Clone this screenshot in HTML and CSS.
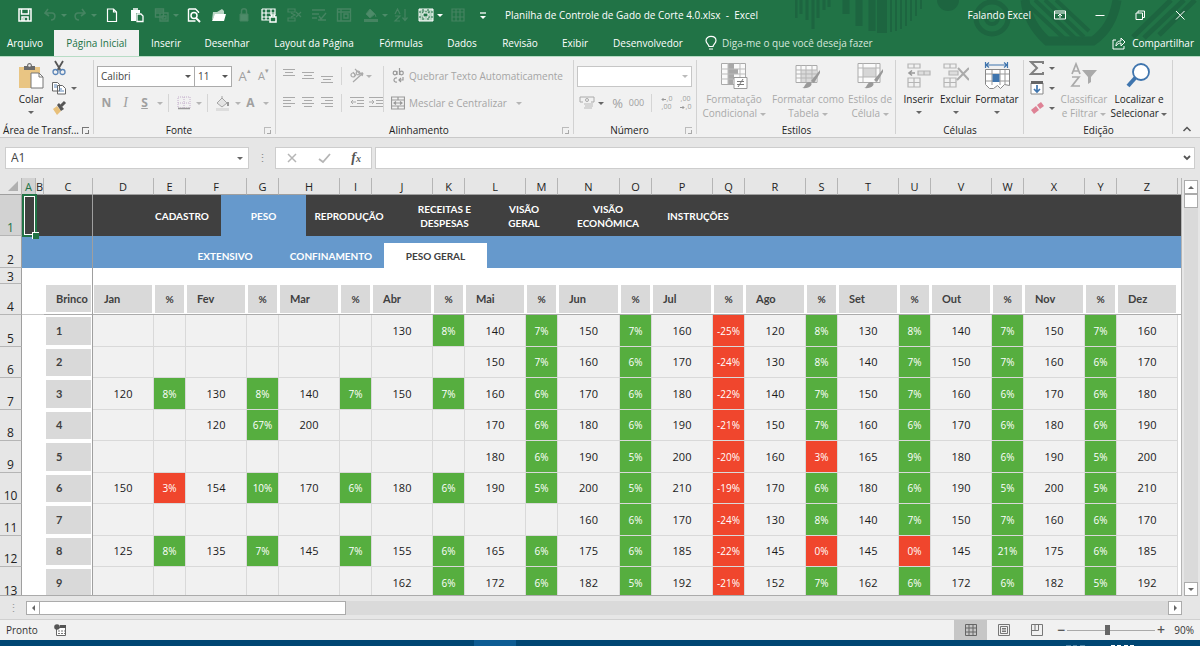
FILE: index.html
```html
<!DOCTYPE html>
<html lang="pt-BR">
<head>
<meta charset="utf-8">
<title>Planilha de Controle de Gado de Corte 4.0.xlsx - Excel</title>
<link rel="stylesheet" href="styles.css">
</head>
<body>
<div class="app">
  <header class="top">
    <svg class="art" width="405" height="56" viewBox="0 0 405 56" aria-hidden="true">
      <g fill="none" stroke="#1d6540" stroke-width="3">
        <path d="M1 0v18M6 0v14M12 0v20M18 0v29M23 0v18M29 0v10M34 0v7"/>
        <path stroke-width="7" d="M51 0v14M64 0v26M77 0v31"/><path stroke-width="10" d="M87 0v33"/>
        <path stroke-width="2" d="M96 0v32M101 0v31M106 0v29M111 0v26M116 0v21M121 0v16M126 0v9"/>
        <circle cx="197" cy="18" r="16" stroke-width="5"/><circle cx="197" cy="18" r="6" stroke-width="4"/>
        <path stroke-width="9" d="M230 0c2 18 10 30 22 41h46c13-9 21-22 24-41"/>
        <path stroke-width="4" d="M240 0l42 40M250 0l39 37M261 0l33 31M228 0l44 41"/>
        <path stroke-width="5" d="M338 37l38-37M349 38l40-38M364 35l36-35"/>
      </g>
      <circle cx="153" cy="0" r="11" fill="#1d6540"/>
    </svg>
    <div class="titlebar">
      <div class="qat">
        <button class="q on" aria-label="Salvar"><svg viewBox="0 0 16 16"><path d="M2 2h12v12H2zM4.500 2v5h7V2M5 14v-4h6v4M7 11v3" fill="none" stroke-width="1.500"/></svg></button>
        <button class="q wide" aria-label="Desfazer"><svg viewBox="0 0 16 16"><path d="M6 2L3 6l4 3M3 6h7c4 0 4 7-1 7" fill="none" stroke-width="1.600"/></svg><i class="dd"></i></button>
        <button class="q wide" aria-label="Refazer"><svg viewBox="0 0 16 16"><path d="M10 2l3 4-4 3M13 6H6c-4 0-4 7 1 7" fill="none" stroke-width="1.600"/></svg><i class="dd"></i></button>
        <button class="q on gap" aria-label="Novo"><svg viewBox="0 0 16 16"><path d="M3.500 2h6l3 3v9.500h-9zM9.500 2v3h3" fill="none" stroke-width="1.200"/></svg></button>
        <button class="q on" aria-label="Colar"><svg viewBox="0 0 16 16"><path d="M2 3h9v3H7v8H2z" fill="#fff" stroke="none"/><path d="M4 2h5M8 7h4l2 2v5.500H8z" fill="#217346" stroke-width="1.300"/></svg></button>
        <button class="q wide" aria-label="Copiar"><svg viewBox="0 0 16 16"><path d="M1.500 2h8v8h-8zM2 4h7M2 6h4M6 6h8v8H6zM8 9h4v3H8z" fill="none" stroke-width="1.400"/></svg><i class="dd"></i></button>
        <button class="q on gap" aria-label="Visualizar"><svg viewBox="0 0 16 16"><path d="M2.500 2h7l3 3v1M2.500 2v12h7" fill="none" stroke-width="1.400"/><circle cx="8" cy="8.500" r="3" fill="none" stroke-width="1.500"/><path d="M10 11l4 4" stroke-width="2"/></svg></button>
        <button class="q on" aria-label="Abrir"><svg viewBox="0 0 16 16"><path d="M1 13l1-8h4l5-3 2 2v3H5z" fill="#b9d5c5" stroke="none"/><path d="M1 14l3-7h11l-2 7z" fill="#fff" stroke="none"/></svg></button>
        <button class="q" aria-label="Proteger"><svg viewBox="0 0 16 16"><path d="M4 7h8v7H4z" fill="#4d8b69" /><path d="M5.500 7V4c0-3 5-3 5 0v3" fill="none" stroke-width="1.500"/></svg></button>
        <button class="q on" aria-label="Bloquear células"><svg viewBox="0 0 16 16"><path d="M1 2h13v6M1 2v11h7M1 6h13M1 10h8M5 2v11M10 2v6" fill="none" stroke-width="1.200"/><path d="M9 10h6v5H9zM10.500 10V8h3v2" fill="#217346" stroke-width="1.500"/></svg></button>
        <button class="q" aria-label="Excluir células"><svg viewBox="0 0 16 16"><path d="M2 2h7v3H2zM2 11h7v3H2zM5 6l4 2-4 2M10 5l5 5M15 5l-5 5" fill="none" stroke-width="1.200"/></svg></button>
        <button class="q" aria-label="Validar"><svg viewBox="0 0 16 16"><path d="M1 3h13M1 7h7M1 11h5M7 13h8M8 9l2 3 5-6" fill="none" stroke-width="1.400"/></svg></button>
        <button class="q" aria-label="Tabela"><svg viewBox="0 0 16 16"><path d="M1.500 2h13v12h-13zM1.500 5h13M5 2v12M8 7h4v4H8z" fill="none" stroke-width="1.400"/></svg></button>
        <button class="q wide gap" aria-label="Preenchimento"><svg viewBox="0 0 16 16"><path d="M7 2l5 5-5 4-4-4zM12 7l1 3" fill="#4d8b69"/><path d="M1 13.500h14" stroke-width="3"/></svg><i class="dd"></i></button>
        <button class="q" aria-label="Classificar"><svg viewBox="0 0 16 16"><path d="M2 7l2.500-5L7 7M2 9h5l-5 5h5M12 2v11M9.500 10.500L12 13.500l2.500-3" fill="none" stroke-width="1.200"/></svg></button>
        <button class="q wide on" aria-label="Congelar painéis"><svg viewBox="0 0 16 16"><path d="M1 2h14v12H1z" fill="#b9d5c5"/><path d="M1 5h14M1 10h14M5 2v12M10 2v12" stroke="#217346" stroke-dasharray="2 1"/><path d="M5 6h5v4H5z" fill="#217346" stroke="#fff"/></svg><i class="dd"></i></button>
        <button class="q gap" aria-label="Inserir tabela"><svg viewBox="0 0 16 16"><path d="M2 2h12v12H2zM2 5h12M6 2v12M10 2v12M2 10h12" fill="none" stroke-width="1.200"/></svg></button>
        <button class="q on" aria-label="Personalizar"><svg viewBox="0 0 16 16"><path d="M5 6h6" stroke-width="1.300"/><path d="M5 9h6l-3 3z" fill="#fff" stroke="none"/></svg></button>
      </div>
      <h1 class="title">Planilha de Controle de Gado de Corte 4.0.xlsx&nbsp; -&nbsp; Excel</h1>
      <div class="win">
        <span class="user">Falando Excel</span>
        <button aria-label="Opções da faixa"><svg viewBox="0 0 14 14"><path d="M1.500 3h11v8h-11zM1.500 5h11M7 10V6M5 8l2-2 2 2"/></svg></button>
        <button aria-label="Minimizar"><svg viewBox="0 0 14 14"><path d="M2.500 7.500h9"/></svg></button>
        <button aria-label="Restaurar"><svg viewBox="0 0 14 14"><path d="M3 5h6.500v6.500H3zM5 5V3h6.500v6.500h-2"/></svg></button>
        <button aria-label="Fechar"><svg viewBox="0 0 14 14"><path d="M3 3l8.500 8.500M11.500 3L3 11.500"/></svg></button>
      </div>
    </div>
    <nav class="tabs">
      <a href="#" class="t50">Arquivo</a><a href="#" class="t85 active">Página Inicial</a><a href="#" class="t54">Inserir</a><a href="#" class="t68">Desenhar</a><a href="#" class="t106">Layout da Página</a><a href="#" class="t68">Fórmulas</a><a href="#" class="t54">Dados</a><a href="#" class="t62">Revisão</a><a href="#" class="t48">Exibir</a><a href="#" class="t98">Desenvolvedor</a>
      <a href="#" class="tell"><svg width="12" height="16" viewBox="0 0 12 16"><path d="M4 11.500c0-2-3-3-3-6C1 0 11 0 11 5.500c0 3-3 4-3 6zM4 14h4" fill="none" stroke="#fff" stroke-width="1.200"/></svg>Diga-me o que você deseja fazer</a>
      <a href="#" class="share"><svg width="14" height="14" viewBox="0 0 14 14"><path d="M4 4H1v9h11v-3M4 10c0-4 2-5 5-5V2l4 4-4 4V7c-2 0-4 1-5 3z" fill="none" stroke="#fff"/></svg>Compartilhar</a>
    </nav>
  </header>

  <section class="ribbon" aria-label="Faixa de opções">
    <div class="group g-clip">
      <div class="body">
        <button class="big paste"><svg width="28" height="28" viewBox="0 0 28 28"><path d="M2 5h21v21H2z" fill="#e9c583"/><path d="M7 4h3c0-4 5-4 5 0h3v4H7z" fill="#6b6b6b"/><circle cx="12.500" cy="3.500" r="1.300" fill="#f1f1f1"/><path d="M14 11h8l4 4v11H14z" fill="#fff" stroke="#777"/><path d="M22 11v4h4" fill="none" stroke="#777"/></svg><span>Colar</span><i class="dd"></i></button>
        <div class="stack">
          <button aria-label="Recortar"><svg width="16" height="16" viewBox="0 0 16 16"><path d="M4 1l6 10M12 1L6 11" stroke="#555" stroke-width="1.800"/><circle cx="4.500" cy="12" r="2.500" fill="none" stroke="#5c86b8" stroke-width="1.300"/><circle cx="11.500" cy="12" r="2.500" fill="none" stroke="#5c86b8" stroke-width="1.300"/></svg></button>
          <button aria-label="Copiar"><svg width="16" height="16" viewBox="0 0 16 16"><path d="M1.500 2.500h5l2 2V11h-7zM6.500 5.500h5l3 3V14h-8z" fill="#fff" stroke="#666"/><path d="M3 5h3M3 7h3M8 9h3M8 11h5" stroke="#5c86b8"/></svg><i class="dd"></i></button>
          <button aria-label="Pincel"><svg width="16" height="16" viewBox="0 0 16 16"><path d="M2 9l4-3 4 5-4 4z" fill="#e8c07a"/><path d="M6 5l2-2 5 6-3 2z" fill="#555"/><path d="M10 6l4-4" stroke="#555" stroke-width="3"/></svg></button>
        </div>
      </div>
      <div class="foot"><span>Área de Transf...</span><button class="launch dark" aria-label="Mais"></button></div>
    </div>

    <div class="group g-font">
      <div class="body rows">
        <div class="row">
          <label class="combo c96"><select aria-label="Fonte"><option>Calibri</option></select></label>
          <label class="combo c38"><select aria-label="Tamanho"><option>11</option></select></label>
          <button class="ic w20 grow" aria-label="Aumentar">A<sup>▴</sup></button><button class="ic w20 shrink" aria-label="Diminuir">A<sup>▾</sup></button>
        </div>
        <div class="row">
          <button class="ic w20"><b>N</b></button><button class="ic w20 serif"><em>I</em></button><button class="ic w20"><b><u>S</u></b></button><i class="dd pale"></i><i class="sep"></i>
          <button class="ic w20" aria-label="Bordas"><svg width="14" height="14" viewBox="0 0 14 14"><path d="M1 1h12v11H1zM7 1v11M1 7h12" fill="none" stroke="#c3aecb" stroke-dasharray="1 1"/><path d="M1 12.500h12" stroke="#999" stroke-width="1.500"/></svg></button><i class="dd pale"></i><i class="sep"></i>
          <button class="ic w20" aria-label="Cor de preenchimento"><svg width="16" height="15" viewBox="0 0 16 15"><path d="M7 2l5 5-5 4-5-4zM7 2V0" fill="#e4e4e4" stroke="#a5a5a5"/><path d="M13 6v4" stroke="#999" stroke-width="2"/><path d="M1 13.500h13" stroke="#ddd" stroke-width="3"/></svg></button><i class="dd pale"></i>
          <button class="ic w20" aria-label="Cor da fonte"><b>A</b></button><i class="dd pale"></i>
        </div>
      </div>
      <div class="foot"><span>Fonte</span><button class="launch" aria-label="Mais"></button></div>
    </div>

    <div class="group g-align">
      <div class="body">
        <div class="rows acol">
          <div class="row">
            <button class="ic w20" aria-label="Em cima"><svg class="ln" viewBox="0 0 14 16"><path d="M1 1.500h12M3 4.500h8M1 7.500h12"/></svg></button><button class="ic w20" aria-label="Meio"><svg class="ln" viewBox="0 0 14 16"><path d="M1 4.500h12M3 7.500h8M1 10.500h12"/></svg></button><button class="ic w20" aria-label="Embaixo"><svg class="ln" viewBox="0 0 14 16"><path d="M1 8.500h12M3 11.500h8M1 14.500h12"/></svg></button><i class="sep"></i>
            <button class="ic w20" aria-label="Orientação"><svg width="16" height="16" viewBox="0 0 16 16"><path d="M4 14L14 5M14 5l-3 .5M14 5l-1 3" fill="none" stroke="#aaa" stroke-width="1.300"/><circle cx="4" cy="7" r="2" fill="none" stroke="#aaa" stroke-width="1.200"/><path d="M4 4l3 4M6 1l5 5" stroke="#aaa" stroke-width="1.200"/><circle cx="9" cy="5" r="1.800" fill="none" stroke="#aaa" stroke-width="1.200"/></svg></button><i class="dd pale"></i>
          </div>
          <div class="row">
            <button class="ic w20" aria-label="Esquerda"><svg class="ln" viewBox="0 0 14 16"><path d="M1 2.500h12M1 5.500h8M1 8.500h12M1 11.500h8"/></svg></button><button class="ic w20" aria-label="Centro"><svg class="ln" viewBox="0 0 14 16"><path d="M1 2.500h12M3 5.500h8M1 8.500h12M3 11.500h8"/></svg></button><button class="ic w20" aria-label="Direita"><svg class="ln" viewBox="0 0 14 16"><path d="M1 2.500h12M5 5.500h8M1 8.500h12M5 11.500h8"/></svg></button><i class="sep"></i>
            <button class="ic w20" aria-label="Diminuir recuo"><svg class="ln" viewBox="0 0 14 16"><path d="M0 2.500h14M7 5.500h7M7 8.500h7M0 11.500h14M6 7H1M3 5L1 7l2 2"/></svg></button><button class="ic w20" aria-label="Aumentar recuo"><svg class="ln" viewBox="0 0 14 16"><path d="M0 2.500h14M7 5.500h7M7 8.500h7M0 11.500h14M0 7h5M3 5l2 2-2 2"/></svg></button>
          </div>
        </div>
        <i class="sep tall"></i>
        <div class="rows tcol">
          <div class="row"><button class="txt"><svg width="14" height="16" viewBox="0 0 14 16" fill="none" stroke="#999" stroke-width="1.200"><circle cx="4" cy="5" r="1.800"/><path d="M6 3v4M8.500 0v7M6 10c-4-1-4 5 0 4M12 9v3H8M10 10l-2 2 2 2"/><circle cx="10.500" cy="5" r="1.800"/></svg>Quebrar Texto Automaticamente</button></div>
          <div class="row"><button class="txt"><svg width="14" height="14" viewBox="0 0 14 14" fill="none" stroke="#999" stroke-width="1.200"><path d="M.5 1h13v12H.5zM.5 4h13M.5 10h13M7 1v3M7 10v3M3 7h8M5 5.500L3 7l2 1.500M9 5.500L11 7 9 8.500"/></svg>Mesclar e Centralizar<i class="dd pale"></i></button></div>
        </div>
      </div>
      <div class="foot"><span>Alinhamento</span><button class="launch" aria-label="Mais"></button></div>
    </div>

    <div class="group g-num">
      <div class="body rows">
        <div class="row"><label class="combo c115 off"><select aria-label="Formato de número"><option></option></select></label></div>
        <div class="row">
          <button class="ic w20" aria-label="Moeda"><svg width="16" height="16" viewBox="0 0 16 16" fill="none" stroke="#aaa"><path d="M1 7V2h14v5h-3M1 7h3"/><circle cx="8" cy="5" r="1.500"/><path d="M5 9h9M6 11h8M5 13h8" stroke="#ccc" stroke-width="1.500"/></svg></button><i class="dd"></i>
          <button class="ic w20 pct">%</button><button class="ic w20 mil">000</button><i class="sep"></i>
          <button class="ic w20 dec" aria-label="Aumentar casas"><span><svg width="5" height="5" viewBox="0 0 5 5"><path d="M5 2.500H1M2.500 1L1 2.500 2.500 4"/></svg>,0</span><span>,00</span></button><button class="ic w20 dec" aria-label="Diminuir casas"><span>,00</span><span><svg width="5" height="5" viewBox="0 0 5 5"><path d="M0 2.500h4M2.500 1L4 2.500 2.500 4"/></svg>,0</span></button>
        </div>
      </div>
      <div class="foot"><span>Número</span><button class="launch" aria-label="Mais"></button></div>
    </div>

    <div class="group g-style">
      <div class="body">
        <button class="big off w74"><svg width="28" height="28" viewBox="0 0 28 28"><path d="M1.500 1.500h24v21h-24z" fill="#fafafa" stroke="#aaa"/><path d="M8 2h6v5H8zM8 7h10v5H8zM8 12h6v5H8zM8 17h5v5H8z" fill="#a8a8a8"/><path d="M8 1v21M20 1v21M1 7h24M1 12h24M1 17h24" stroke="#bbb" fill="none"/><path d="M14 15.500h13v11H14z" fill="#fff" stroke="#999"/><path d="M17 19.500h7M17 22.500h7M23 17l-5 8" stroke="#777"/></svg><span>Formatação<br>Condicional <i class="dd pale"></i></span></button>
        <button class="big off w74"><svg width="28" height="28" viewBox="0 0 28 28"><path d="M2 3.500h21v17H2z" fill="#fafafa" stroke="#aaa"/><path d="M7 8h16v12H7z" fill="#dadada"/><path d="M2 8h21M2 12h21M2 16h21M7 3v17M12 3v17M18 3v17" stroke="#b5b5b5"/><path d="M26 8l-9 11 3 2 6-10z" fill="#999"/><path d="M8 26c3 0 3-7 8-6 4 2 0 7-8 6z" fill="#999"/></svg><span>Formatar como<br>Tabela <i class="dd pale"></i></span></button>
        <button class="big off w50"><svg width="28" height="28" viewBox="0 0 28 28"><path d="M2 1.500h22v19H2z" fill="#fafafa" stroke="#aaa"/><path d="M7 6h13v9H7z" fill="#d6d6d6"/><path d="M2 6h22M2 15h22M7 1v19M20 1v19" stroke="#b5b5b5"/><path d="M27 7l-9 11 3 2 6-10z" fill="#999"/><path d="M8 26c3 0 3-7 8-6 4 2 0 7-8 6z" fill="#999"/></svg><span>Estilos de<br>Célula <i class="dd pale"></i></span></button>
      </div>
      <div class="foot"><span>Estilos</span></div>
    </div>

    <div class="group g-cell">
      <div class="body">
        <button class="big w37"><svg width="26" height="28" viewBox="0 0 26 28" fill="none" stroke="#b5b5b5" stroke-width="1.200"><path d="M2 2h12v4H2zM8 2v4M2 16h12v9H2zM2 20.500h12M8 16v9"/><path d="M12 9h12v4H12zM18 9v4" fill="#ddd"/><path d="M9 11H3M6 8.500L3 11l3 2.500" stroke="#999" stroke-width="1.600"/></svg><span>Inserir</span><i class="dd"></i></button>
        <button class="big w37"><svg width="26" height="28" viewBox="0 0 26 28" fill="none" stroke="#b5b5b5" stroke-width="1.200"><path d="M1 2h12v4H1zM7 2v4M1 16h12v9H1zM1 20.500h12M7 16v9"/><path d="M6 9h9v4H6z" fill="#ddd"/><path d="M15 6l11 12M26 6L14 18" stroke="#aaa" stroke-width="2"/></svg><span>Excluir</span><i class="dd"></i></button>
        <button class="big w46"><svg width="28" height="28" viewBox="0 0 28 28"><path d="M3 3h21M6 .5L3 3l3 2.500M21 .5L24 3l-3 2.500M2.500 0v6M24.500 0v6" fill="none" stroke="#3f75ae" stroke-width="1.200"/><path d="M2.500 7.500h24v16l-5-1-4 4-3-3-4 3h-4l-4-4z" fill="#fff" stroke="#888"/><path d="M9 8v15M17 8v15M22 8v15M3 12h23M3 19h23" stroke="#999" fill="none"/><path d="M9.500 12h7v8h-7z" fill="#3f75ae"/></svg><span>Formatar</span><i class="dd"></i></button>
      </div>
      <div class="foot"><span>Células</span></div>
    </div>

    <div class="group g-edit">
      <div class="body">
        <div class="stack">
          <button aria-label="Soma"><svg width="16" height="16" viewBox="0 0 16 16"><path d="M14 4V2H2l6 6-6 6h12v-2" fill="none" stroke="#808080" stroke-width="2"/></svg><i class="dd"></i></button>
          <button aria-label="Preencher"><svg width="16" height="16" viewBox="0 0 16 16"><path d="M2 3h12v11H2z" fill="#fff" stroke="#888"/><path d="M2 2.500h12" stroke="#666" stroke-width="3"/><path d="M8 5v7M5 9l3 3 3-3" fill="none" stroke="#3f75ae" stroke-width="1.700"/></svg><i class="dd"></i></button>
          <button aria-label="Limpar"><svg width="16" height="16" viewBox="0 0 16 16"><path d="M8 5l4-3 3 4-4 3z" fill="#de8295"/><path d="M7 6l3 4-5 4-3-4z" fill="#de8295"/></svg><i class="dd"></i></button>
        </div>
        <button class="big off w54"><svg width="28" height="28" viewBox="0 0 28 28" fill="none" stroke="#aaa" stroke-width="1.700"><path d="M2 12l4-10 4 10M3.500 9h5M2 15h7l-7 9h8"/><path d="M12 8h15l-6 7v5l-3 2v-7z" fill="#aaa" stroke="none"/></svg><span>Classificar<br>e Filtrar <i class="dd pale"></i></span></button>
        <button class="big w56"><svg width="28" height="28" viewBox="0 0 28 28"><path d="M11 15l-8 9" stroke="#3f75ae" stroke-width="4"/><circle cx="16" cy="10" r="8" fill="#fff" stroke="#3f75ae" stroke-width="1.800"/></svg><span>Localizar e<br>Selecionar <i class="dd"></i></span></button>
      </div>
      <div class="foot"><span>Edição</span></div>
    </div>
    <button class="collapse" aria-label="Recolher"><svg width="10" height="8" viewBox="0 0 10 8"><path d="M1.500 6L5 2.500 8.500 6" fill="none" stroke="#555" stroke-width="1.500"/></svg></button>
  </section>

  <section class="fbar">
    <label class="namebox"><input value="A1" aria-label="Caixa de nome"><i class="dd"></i></label>
    <span class="dots">⋮</span>
    <div class="fx">
      <button aria-label="Cancelar"><svg width="12" height="12" viewBox="0 0 12 12"><path d="M2 2l8 8M10 2l-8 8" stroke="#b5b5b5" stroke-width="1.500"/></svg></button>
      <button aria-label="Confirmar"><svg width="13" height="12" viewBox="0 0 13 12"><path d="M1 7l4 3 7-8" fill="none" stroke="#b5b5b5" stroke-width="1.800"/></svg></button>
      <button class="fxi">f<small>x</small></button>
    </div>
    <label class="formula"><input aria-label="Fórmula"><svg width="10" height="8" viewBox="0 0 10 8"><path d="M2 2l3 3 3-3" fill="none" stroke="#555" stroke-width="1.800"/></svg></label>
  </section>

  <main class="sheet">
    <div class="grid">
      <table id="cells"></table>
      <div class="cursor"></div>
    </div>
    <div class="vscroll"><button aria-label="Acima"><i class="up"></i></button><div class="vthumb"></div><div class="space"></div><button aria-label="Abaixo"><i class="down"></i></button></div>
  </main>

  <div class="hscroll"><span class="dots">⋮</span><div class="htrack"><button aria-label="Esquerda"><i class="left"></i></button><div class="hthumb"></div><div class="space"></div><button aria-label="Direita"><i class="right"></i></button></div></div>

  <footer class="status">
    <span class="ready">Pronto</span>
    <svg width="13" height="13" viewBox="0 0 13 13"><path d="M2.500 3.500h9v8h-9z" fill="#fff" stroke="#666"/><path d="M6 2.500h6" stroke="#555" stroke-width="3"/><circle cx="3" cy="3" r="2.800" fill="#555"/><path d="M4 7h7M4 9.500h7" stroke="#777" stroke-dasharray="2 1"/></svg>
    <div class="views">
      <button class="sel" aria-label="Normal"><svg width="12" height="12" viewBox="0 0 12 12"><path d="M.5.5h11v11H.5zM.5 4h11M.5 8h11M4 .5v11M8 .5v11" fill="none" stroke="#666"/></svg></button>
      <button aria-label="Layout da página"><svg width="12" height="12" viewBox="0 0 12 12"><path d="M.5.5h11v11H.5zM2.500 2.500h7v7h-7zM4 4.500h4M4 6h4M4 7.500h4" fill="none" stroke="#777"/></svg></button>
      <button aria-label="Quebra de página"><svg width="12" height="12" viewBox="0 0 12 12"><path d="M.5.5h11v11H.5zM.5 6.500h7v-6M4 .5v6" fill="none" stroke="#777"/></svg></button>
    </div>
    <button class="zm" aria-label="Reduzir">−</button>
    <input class="range" type="range" min="10" max="200" value="96" aria-label="Zoom">
    <button class="zm" aria-label="Ampliar">+</button>
    <span class="pctv">90%</span>
  </footer>
  <div class="taskbar"><span class="run"></span><svg width="72" height="6" viewBox="0 0 72 6"><path d="M0 5.500h5M7 5.500h4M14 5.500h5" stroke="#4f86a8"/><path d="M45 5.500h4M51 5.500h4M58 5.500h4M64 5.500h4" stroke="#fff"/></svg></div>
</div>
<script src="script.js"></script>
</body>
</html>
```
FILE: styles.css
```css
:root { --ui: "Open Sans", "Noto Sans", sans-serif; --cell: Lato, "Open Sans", sans-serif; --green: #217346; }
* { box-sizing: border-box; }
body { margin: 0; font: 11px/14px var(--ui); color: #333; background: #e6e6e6; }
button { border: 0; padding: 0; background: none; font: inherit; color: inherit; }
a { color: inherit; text-decoration: none; }
svg { display: block; flex: none; }
.app { display: flex; flex-direction: column; height: 100vh; overflow: hidden; }
.space { flex: 1; }

.dd { display: inline-block; flex: none; border: 3px solid transparent; border-top-color: #666; border-bottom: 0; width: 0; height: 0; vertical-align: middle; }
.dd.pale { border-top-color: #b5b5b5; }

.top { position: relative; background: var(--green); color: #fff; height: 56px; flex: none; }
.art { position: absolute; right: 0; top: 0; }
.titlebar { position: relative; display: flex; height: 30px; align-items: center; }
.qat { display: flex; padding-left: 13px; width: 505px; flex: none; }
.q { width: 25px; height: 16px; display: flex; align-items: center; gap: 3px; padding-left: 4px; }
.q svg { width: 16px; height: 16px; stroke: #458461; }
.q.on svg { stroke: #fff; }
.q.wide { width: 30px; }
.q.gap { margin-left: 2px; }
.q .dd { border-top-color: #4d8b69; }
.q.on .dd { border-top-color: #fff; }
.title { margin: 0; font-size: 10px; font-weight: 400; line-height: 14px; white-space: nowrap; flex: 1; }
.win { display: flex; align-items: center; }
.user { margin-right: 9px; font-size: 10px; }
.win button { width: 40px; display: flex; justify-content: center; }
.win svg { width: 14px; height: 14px; fill: none; stroke: #fff; }
.tabs { position: relative; display: flex; height: 26px; font-size: 10px; }
.tabs a { display: flex; align-items: center; justify-content: center; white-space: nowrap; }
.tabs .active { background: #f1f1f1; color: var(--green); }
.t50 { width: 54px; padding-right: 4px; }
.t85 { width: 85px; } .t54 { width: 54px; } .t68 { width: 68px; } .t106 { width: 106px; }
.t62 { width: 62px; } .t48 { width: 48px; } .t98 { width: 98px; }
.tabs .tell { margin-left: 8px; gap: 5px; color: #d5e6dc; }
.tabs .share { margin-left: auto; margin-right: 6px; gap: 6px; }

.ribbon { display: flex; flex: none; height: 82px; background: #f1f1f1; border-top: 1px solid #b7dcc5; border-bottom: 1px solid #c9c9c9; font-size: 10px; padding-top: 2px; }
.group { display: flex; flex-direction: column; position: relative; flex: none; }
.group::after { content: ""; position: absolute; right: 0; top: 1px; bottom: 3px; border-right: 1px solid #d2d2d2; }
.g-clip { width: 94px; } .g-font { width: 182px; } .g-align { width: 298px; } .g-num { width: 123px; }
.g-style { width: 199px; } .g-cell { width: 128px; } .g-edit { width: 149px; }
.body { display: flex; flex: 1; }
.foot { display: flex; align-items: center; height: 14px; }
.foot span { flex: 1; text-align: center; white-space: nowrap; color: #222; }
.launch { width: 7px; height: 7px; margin: 0 5px 0 0; border: 1px solid #bbb; border-right: 0; border-bottom: 0; position: relative; }
.launch::after { content: ""; position: absolute; right: 0; bottom: 0; width: 3px; height: 3px; border: solid #aaa; border-width: 0 1px 1px 0; }
.launch.dark, .launch.dark::after { border-color: #777; }
.big { display: flex; flex-direction: column; align-items: center; padding-top: 3px; white-space: nowrap; color: #222; }
.big span { margin-top: 2px; }
.big > .dd { margin-top: 5px; }
.big.off { color: #a9a9a9; }
.paste { width: 46px; margin-left: 8px; }
.stack { display: flex; flex-direction: column; gap: 4px; width: 28px; }
.g-clip .stack, .g-edit .stack { padding-top: 1px; }
.stack button { display: flex; align-items: center; gap: 4px; height: 16px; }
.g-clip .stack { margin-left: -3px; }
.rows { display: flex; flex-direction: column; gap: 5px; padding-top: 6px; }
.row { display: flex; align-items: center; height: 22px; }
.g-font .rows, .g-num .rows { padding-left: 3px; }
.ic { display: flex; align-items: center; justify-content: center; color: #a0a0a0; height: 20px; flex: none; font-size: 12px; }
.w20 { width: 19px; }
.ic sup { font-size: 7px; line-height: 7px; align-self: flex-start; margin-top: 1px; }
.grow { font-size: 13px; margin-left: 3px; } .shrink { font-size: 11px; }
.g-font .dd { margin-left: 3px; }
.serif { font-family: "Liberation Serif", serif; font-size: 14px; }
.combo { position: relative; display: block; height: 21px; }
.combo select { appearance: none; width: 100%; height: 100%; border: 1px solid #ababab; border-radius: 0; background: #fff; font: 10px/14px var(--ui); color: #444; padding: 0 3px; margin: 0; }
.combo::after { content: ""; position: absolute; right: 4px; top: 9px; border: 3px solid transparent; border-top-color: #555; border-bottom: 0; }
.combo.off select { border-color: #c6c6c6; }
.combo.off::after { border-top-color: #bbb; }
.c96 { width: 98px; } .c38 { width: 38px; margin-left: -1px; } .c115 { width: 115px; }
.sep { width: 1px; height: 18px; background: #d5d5d5; margin: 0 5px; flex: none; }
.sep.tall { height: 46px; margin: 7px 7px 0 5px; }
.acol { padding-left: 3px; width: 102px; }
.ln { width: 14px; height: 16px; fill: none; stroke: #aaa; }
.txt { display: flex; align-items: center; gap: 4px; color: #a5a5a5; white-space: nowrap; }
.txt .dd { margin-left: 5px; }
.g-align .rows { flex: none; }
.pct { font-size: 13px; margin-left: 4px; }
.mil { font-size: 9px; }
.g-num .row > .dd { margin-left: 2px; }
.dec { flex-direction: column; font-size: 7px; line-height: 8px; }
.dec span { display: flex; align-items: center; gap: 1px; }
.dec svg { fill: none; stroke: #999; }
.g-style .w74 { width: 74px; } .g-style .w50 { width: 50px; }
.w37 { width: 37px; } .w46 { width: 46px; } .w54 { width: 54px; } .w56 { width: 56px; }
.g-cell .body { padding-left: 4px; }
.g-edit .stack { margin-left: 5px; }
.collapse { margin: auto 8px 4px auto; }

.fbar { display: flex; flex: none; height: 40px; padding: 9px 5px 9px; align-items: stretch; background: #e6e6e6; }
.namebox, .fx, .formula { display: flex; align-items: center; background: #fff; border: 1px solid #cdcdcd; }
.namebox { width: 244px; padding-right: 5px; }
.fbar input { border: 0; outline: 0; background: none; flex: 1; min-width: 0; font: 12px/14px var(--ui); color: #444; padding: 0 5px; }
.dots { width: 26px; text-align: center; color: #888; align-self: center; }
.fx { width: 97px; justify-content: space-between; padding: 0 10px; }
.fxi { font: italic bold 14px/14px "Liberation Serif", serif; color: #555; }
.fxi small { font-size: 10px; }
.formula { flex: 1; margin-left: 3px; padding-right: 2px; }

.sheet { display: flex; flex: 1; min-height: 0; }
.grid { position: relative; flex: 1; overflow: hidden; background: #fff; border-right: 1px solid #b5b5b5; border-bottom: 1px solid #ababab; }
table { border-collapse: separate; border-spacing: 0; table-layout: fixed; width: 100%; }
td, th { padding: 0; font-weight: 400; overflow: hidden; white-space: nowrap; }
.c-n { width: 22px; } .c-a { width: 14px; } .c-b { width: 8px; } .c-c { width: 49px; } .c-m { width: 61px; } .c-w { width: 62px; } .c-p { width: 32px; }
.letters th { height: 17px; background: #e6e6e6; font: 11px/14px var(--ui); color: #222; border-right: 1px solid #b5b5b5; border-bottom: 1px solid #9f9f9f; padding-top: 2px; text-align: center; }
.letters th:last-child { border-right: 0; }
.letters .cur { background: #d2d2d2; color: var(--green); }
.corner { position: relative; }
.corner::after { content: ""; position: absolute; right: 3px; bottom: 3px; border: 5px solid transparent; border-right-color: #b0b0b0; border-bottom-color: #b0b0b0; }
.num { background: #e6e6e6; border-right: 1px solid #9f9f9f; border-bottom: 1px solid #b5b5b5; font: 12px/14px var(--ui); color: #222; vertical-align: bottom; text-align: center; }
.num.cur { background: #d2d2d2; color: var(--green); }
.r1 { height: 41px; } .r2 { height: 32px; } .r3 { height: 16px; } .r4 { height: 31px; }
.r3 .num { line-height: 12px; }
.r1 .band { background: #404040; }
.r2 .band { background: #6699cc; }
.freeze { border-right: 1px solid #9f9f9f; }
.menu, .submenu { display: flex; color: #fff; font: bold 10px/14px var(--cell); text-align: center; }
.menu { height: 41px; padding-left: 50px; }
.submenu { height: 32px; padding-left: 79px; align-items: flex-end; }
.menu a, .submenu a { display: flex; align-items: center; justify-content: center; height: 100%; }
.menu .on { background: #6699cc; }
.m78 { width: 78px; } .m85 { width: 85px; } .m86 { width: 86px; } .m105 { width: 105px; } .m54 { width: 54px; } .m114 { width: 114px; } .m66 { width: 66px; } .m106 { width: 106px; } .m103 { width: 103px; }
.submenu a { padding-top: 7px; }
.submenu .on { background: #fff; color: #404040; height: 25px; padding-top: 0; }
.r4 td { border-bottom: 1px solid #ababab; }
.r4 .blank { border-bottom-color: #c9c9c9; }
.tag { background: #d9d9d9; font: bold 11px/14px var(--cell); color: #404040; border: solid #fff; border-width: 1px 2px 1px 1px; height: 100%; display: flex; align-items: center; padding-left: 10px; }
.r4 .tag { height: 30px; }
.tag.p { padding-left: 0; justify-content: center; font-size: 10px; }
.c .tag { border-width: 1px 1px 2px 2px; }
.data { height: 32px; }
.data.short { height: 31px; }
.data .tag { height: 31px; border-width: 1px 1px 2px 2px; padding-left: 10px; }
.data.short .tag { height: 30px; }
.v, .p0, .g, .r { text-align: center; background: #f1f1f1; border-right: 1px solid #d9d9d9; border-bottom: 1px solid #d9d9d9; font: 11px/14px var(--ui); color: #1a1a1a; }
.g, .r { color: #fff; font-size: 10px; }
.g { background: #56ae3f; }
.r { background: #f0462d; }
.cursor { position: absolute; left: 22px; top: 16px; width: 15px; height: 43px; border: 2px solid var(--green); box-shadow: inset 0 0 0 1px #fff; }
.cursor::after { content: ""; position: absolute; right: -4px; bottom: -4px; width: 6px; height: 6px; background: var(--green); border: solid #fff; border-width: 1px 0 0 1px; }

.vscroll { width: 18px; padding: 2px 2px 0; display: flex; flex-direction: column; }
.vscroll button, .vthumb, .htrack button, .hthumb { background: #fff; border: 1px solid #ababab; flex: none; display: flex; align-items: center; justify-content: center; }
.vscroll button { height: 14px; }
.vthumb { height: 14px; }
.vscroll .space, .htrack .space { background: #dadada; }
.up, .down, .left, .right { border: 3px solid transparent; }
.up { border-bottom-color: #666; border-top: 0; } .down { border-top-color: #666; border-bottom: 0; }
.left { border-right-color: #666; border-left: 0; } .right { border-left-color: #666; border-right: 0; }
.hscroll { display: flex; flex: none; height: 24px; padding: 5px 18px 5px 0; border-bottom: 1px solid #d0d0d0; }
.hscroll .dots { color: #999; }
.htrack { display: flex; flex: 1; height: 14px; }
.htrack button { width: 14px; }
.hthumb { width: 307px; margin-left: -1px; }

.status { display: flex; flex: none; align-items: center; height: 20px; background: #f1f1f1; font-size: 10px; padding: 0 6px; }
.ready { width: 48px; }
.views { display: flex; height: 100%; margin-left: auto; }
.views button { width: 33px; display: flex; align-items: center; justify-content: center; }
.views .sel { background: #c6c6c6; }
.zm { width: 12px; font-size: 14px; font-weight: 600; color: #555; }
.zm:first-of-type { margin-left: 2px; }
.range { appearance: none; width: 88px; height: 12px; margin: 0; background: linear-gradient(#aaa, #aaa) center / 100% 1px no-repeat; }
.range::-webkit-slider-thumb { appearance: none; width: 5px; height: 10px; background: #666; }
.pctv { width: 27px; text-align: right; }
.taskbar { display: flex; flex: none; height: 6px; background: #004673; padding-right: 62px; }
.run { width: 42px; margin-left: 474px; margin-right: auto; background: #0d5c93; }
```
FILE: script.js
```js
const months = ["Jan", "Fev", "Mar", "Abr", "Mai", "Jun", "Jul", "Ago", "Set", "Out", "Nov", "Dez"];
const letters = "ABCDEFGHIJKLMNOPQRSTUVWXYZ".split("");
// Weight and variation alternate: weight, %, weight, %, ...
const rows = [
  ",,,,,,130,8,140,7,150,7,160,-25,120,8,130,8,140,7,150,7,160",
  ",,,,,,,,150,7,160,6,170,-24,130,8,140,7,150,7,160,6,170",
  "120,8,130,8,140,7,150,7,160,6,170,6,180,-22,140,7,150,7,160,6,170,6,180",
  ",,120,67,200,,,,170,6,180,6,190,-21,150,7,160,6,170,6,180,6,190",
  ",,,,,,,,180,6,190,5,200,-20,160,3,165,9,180,6,190,5,200",
  "150,3,154,10,170,6,180,6,190,5,200,5,210,-19,170,6,180,6,190,5,200,5,210",
  ",,,,,,,,,,160,6,170,-24,130,8,140,7,150,7,160,6,170",
  "125,8,135,7,145,7,155,6,165,6,175,6,185,-22,145,0,145,0,145,21,175,6,185",
  ",,,,,,162,6,172,6,182,5,192,-21,152,7,162,6,172,6,182,5,192"
];
let h = '<colgroup><col class="c-n"><col class="c-a"><col class="c-b"><col class="c-c">';
for (let i = 0; i < 23; i++) h += `<col class="${i % 2 ? "c-p" : i === 10 ? "c-w" : "c-m"}">`;
h += "<col></colgroup>";
h += '<tr class="letters"><th class="corner"></th>' + letters.map(l => `<th${l === "A" ? ' class="cur"' : ""}>${l}</th>`).join("") + "<th></th></tr>";
const link = (w, t, on) => `<a href="#" class="${w}${on ? " on" : ""}">${t}</a>`;
h += '<tr class="r1"><th class="num cur">1</th><td class="band freeze" colspan="3"></td><td class="band" colspan="24"><nav class="menu">' +
  link("m78", "CADASTRO") + link("m85", "PESO", true) + link("m86", "REPRODUÇÃO") + link("m105", "RECEITAS E<br>DESPESAS") +
  link("m54", "VISÃO<br>GERAL") + link("m114", "VISÃO<br>ECONÔMICA") + link("m66", "INSTRUÇÕES") + "</nav></td></tr>";
h += '<tr class="r2"><th class="num">2</th><td class="band freeze" colspan="3"></td><td class="band" colspan="24"><nav class="submenu">' +
  link("m106", "EXTENSIVO") + link("m106", "CONFINAMENTO") + link("m103", "PESO GERAL", true) + "</nav></td></tr>";
h += '<tr class="r3"><th class="num">3</th><td class="freeze" colspan="3"></td><td colspan="24"></td></tr>';
h += '<tr class="r4"><th class="num">4</th><td class="blank" colspan="2"></td><td class="c freeze"><div class="tag">Brinco</div></td>';
months.forEach((m, i) => {
  h += `<td><div class="tag">${m}</div></td>`;
  if (i < 11) h += '<td><div class="tag p">%</div></td>';
});
h += "<td></td></tr>";
rows.forEach((r, n) => {
  h += `<tr class="data${n % 2 ? " short" : ""}"><th class="num">${n + 5}</th><td colspan="2"></td><td class="freeze"><div class="tag">${n + 1}</div></td>`;
  r.split(",").forEach((v, i) => {
    if (i % 2 === 0) h += `<td class="v">${v}</td>`;
    else if (v === "") h += '<td class="p0"></td>';
    else h += `<td class="${+v < 4 ? "r" : "g"}">${v}%</td>`;
  });
  h += "<td></td></tr>";
});
document.getElementById("cells").innerHTML = h;
```
